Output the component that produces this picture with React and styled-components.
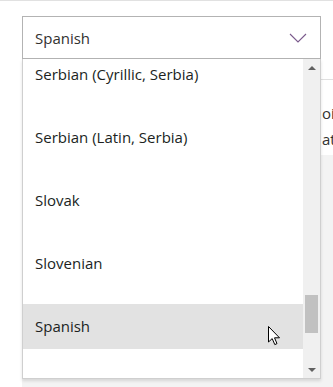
import React from "react";
import styled, { createGlobalStyle } from "styled-components";

const Global = createGlobalStyle`
  html, body { margin: 0; padding: 0; background: #fff; overflow: hidden; }
  body { font-family: "Open Sans", "Noto Sans", Arial, sans-serif; color: #323130; }
`;

const Page = styled.div`
  position: relative;
  width: 333px;
  height: 387px;
  box-sizing: border-box;
  border-top: 1px solid #e1e1e1;
  padding: 15px 12px 0 22px;
  overflow: hidden;
`;

const DropdownWrap = styled.div`
  position: relative;
  z-index: 2;
`;

const Field = styled.div`
  height: 43px;
  box-sizing: border-box;
  border: 1px solid #b3b3b3;
  display: flex;
  align-items: center;
  justify-content: space-between;
  padding: 0 13px 0 12px;
  font-size: 15px;
  color: #323130;
`;

const Chevron = styled.svg`
  width: 18px;
  height: 10px;
  display: block;
`;

const Menu = styled.div`
  position: absolute;
  top: 100%;
  left: 0;
  width: 299px;
  height: 320px;
  box-sizing: border-box;
  border: 1px solid #cfcfcf;
  border-top: none;
  background: #fff;
  box-shadow: 0 2px 3px rgba(0, 0, 0, 0.12);
  display: flex;
  overflow: hidden;
`;

const Options = styled.div`
  flex: 1;
  display: flex;
  flex-direction: column;
  gap: 18px;
  margin-top: -7px;
`;

const Option = styled.div`
  position: relative;
  height: 45px;
  flex: none;
  line-height: 45px;
  padding-left: 12px;
  font-size: 15px;
  color: #201f1e;
  background: ${(p) => (p.$hover ? "#e2e2e2" : "transparent")};
`;

const Scrollbar = styled.div`
  width: 17px;
  flex: none;
  background: #f0f0f0;
  display: flex;
  flex-direction: column;
  align-items: center;
`;

const Arrow = styled.div`
  width: 0;
  height: 0;
  border-left: 4px solid transparent;
  border-right: 4px solid transparent;
  ${(p) =>
    p.$down
      ? "border-top: 4px solid #606060;"
      : "border-bottom: 4px solid #606060;"}
  margin: ${(p) => (p.$down ? "0 0 6px" : "7px 0 0")};
`;

const Track = styled.div`
  flex: 1;
  width: 100%;
  display: flex;
  flex-direction: column;
  align-items: center;
  padding-top: 225px;
`;

const Thumb = styled.div`
  width: 13px;
  height: 38px;
  background: #c1c1c1;
`;

const Cursor = styled.svg`
  position: absolute;
  left: 245px;
  top: 22px;
  width: 13px;
  height: 20px;
`;

const Behind = styled.div`
  position: relative;
  z-index: 1;
`;

const Rule = styled.div`
  margin-top: 20px;
  border-top: 1px solid #e0e0e0;
  margin-right: -12px;
`;

const TextRow = styled.div`
  display: flex;
  font-size: 15px;
  line-height: 26px;
  white-space: nowrap;
  color: #323130;
`;

const Spacer = styled.div`
  width: 300px;
  flex: none;
`;

const TextBlock = styled.div`
  padding-top: 20px;
`;

const GrayPanel = styled.div`
  margin-top: 3px;
  margin-right: -12px;
  height: 240px;
  background: #f3f3f3;
`;

const items = [
  "Serbian (Cyrillic, Serbia)",
  "Serbian (Latin, Serbia)",
  "Slovak",
  "Slovenian",
  "Spanish",
];

export default function App() {
  return (
    <>
      <Global />
      <Page>
        <DropdownWrap>
          <Field>
            <span>Spanish</span>
            <Chevron viewBox="0 0 18 10">
              <polyline
                points="1,1 9,9 17,1"
                fill="none"
                stroke="#7a5a8c"
                strokeWidth="1.1"
              />
            </Chevron>
          </Field>
          <Menu>
            <Options>
              {items.map((it) => (
                <Option key={it} $hover={it === "Spanish"}>
                  {it}
                  {it === "Spanish" && (
                    <Cursor viewBox="0 0 13 20">
                      <path
                        d="M0.5,0.5 L0.5,16 L4.2,12.6 L6.8,18.6 L9,17.6 L6.5,11.8 L11.5,11.8 Z"
                        fill="#fff"
                        stroke="#000"
                        strokeWidth="1"
                        strokeLinejoin="round"
                      />
                    </Cursor>
                  )}
                </Option>
              ))}
            </Options>
            <Scrollbar>
              <Arrow />
              <Track>
                <Thumb />
              </Track>
              <Arrow $down />
            </Scrollbar>
          </Menu>
        </DropdownWrap>
        <Behind>
          <Rule />
          <TextBlock>
            <TextRow>
              <Spacer />
              <span>oi</span>
            </TextRow>
            <TextRow>
              <Spacer />
              <span>ati</span>
            </TextRow>
          </TextBlock>
          <GrayPanel />
        </Behind>
      </Page>
    </>
  );
}
